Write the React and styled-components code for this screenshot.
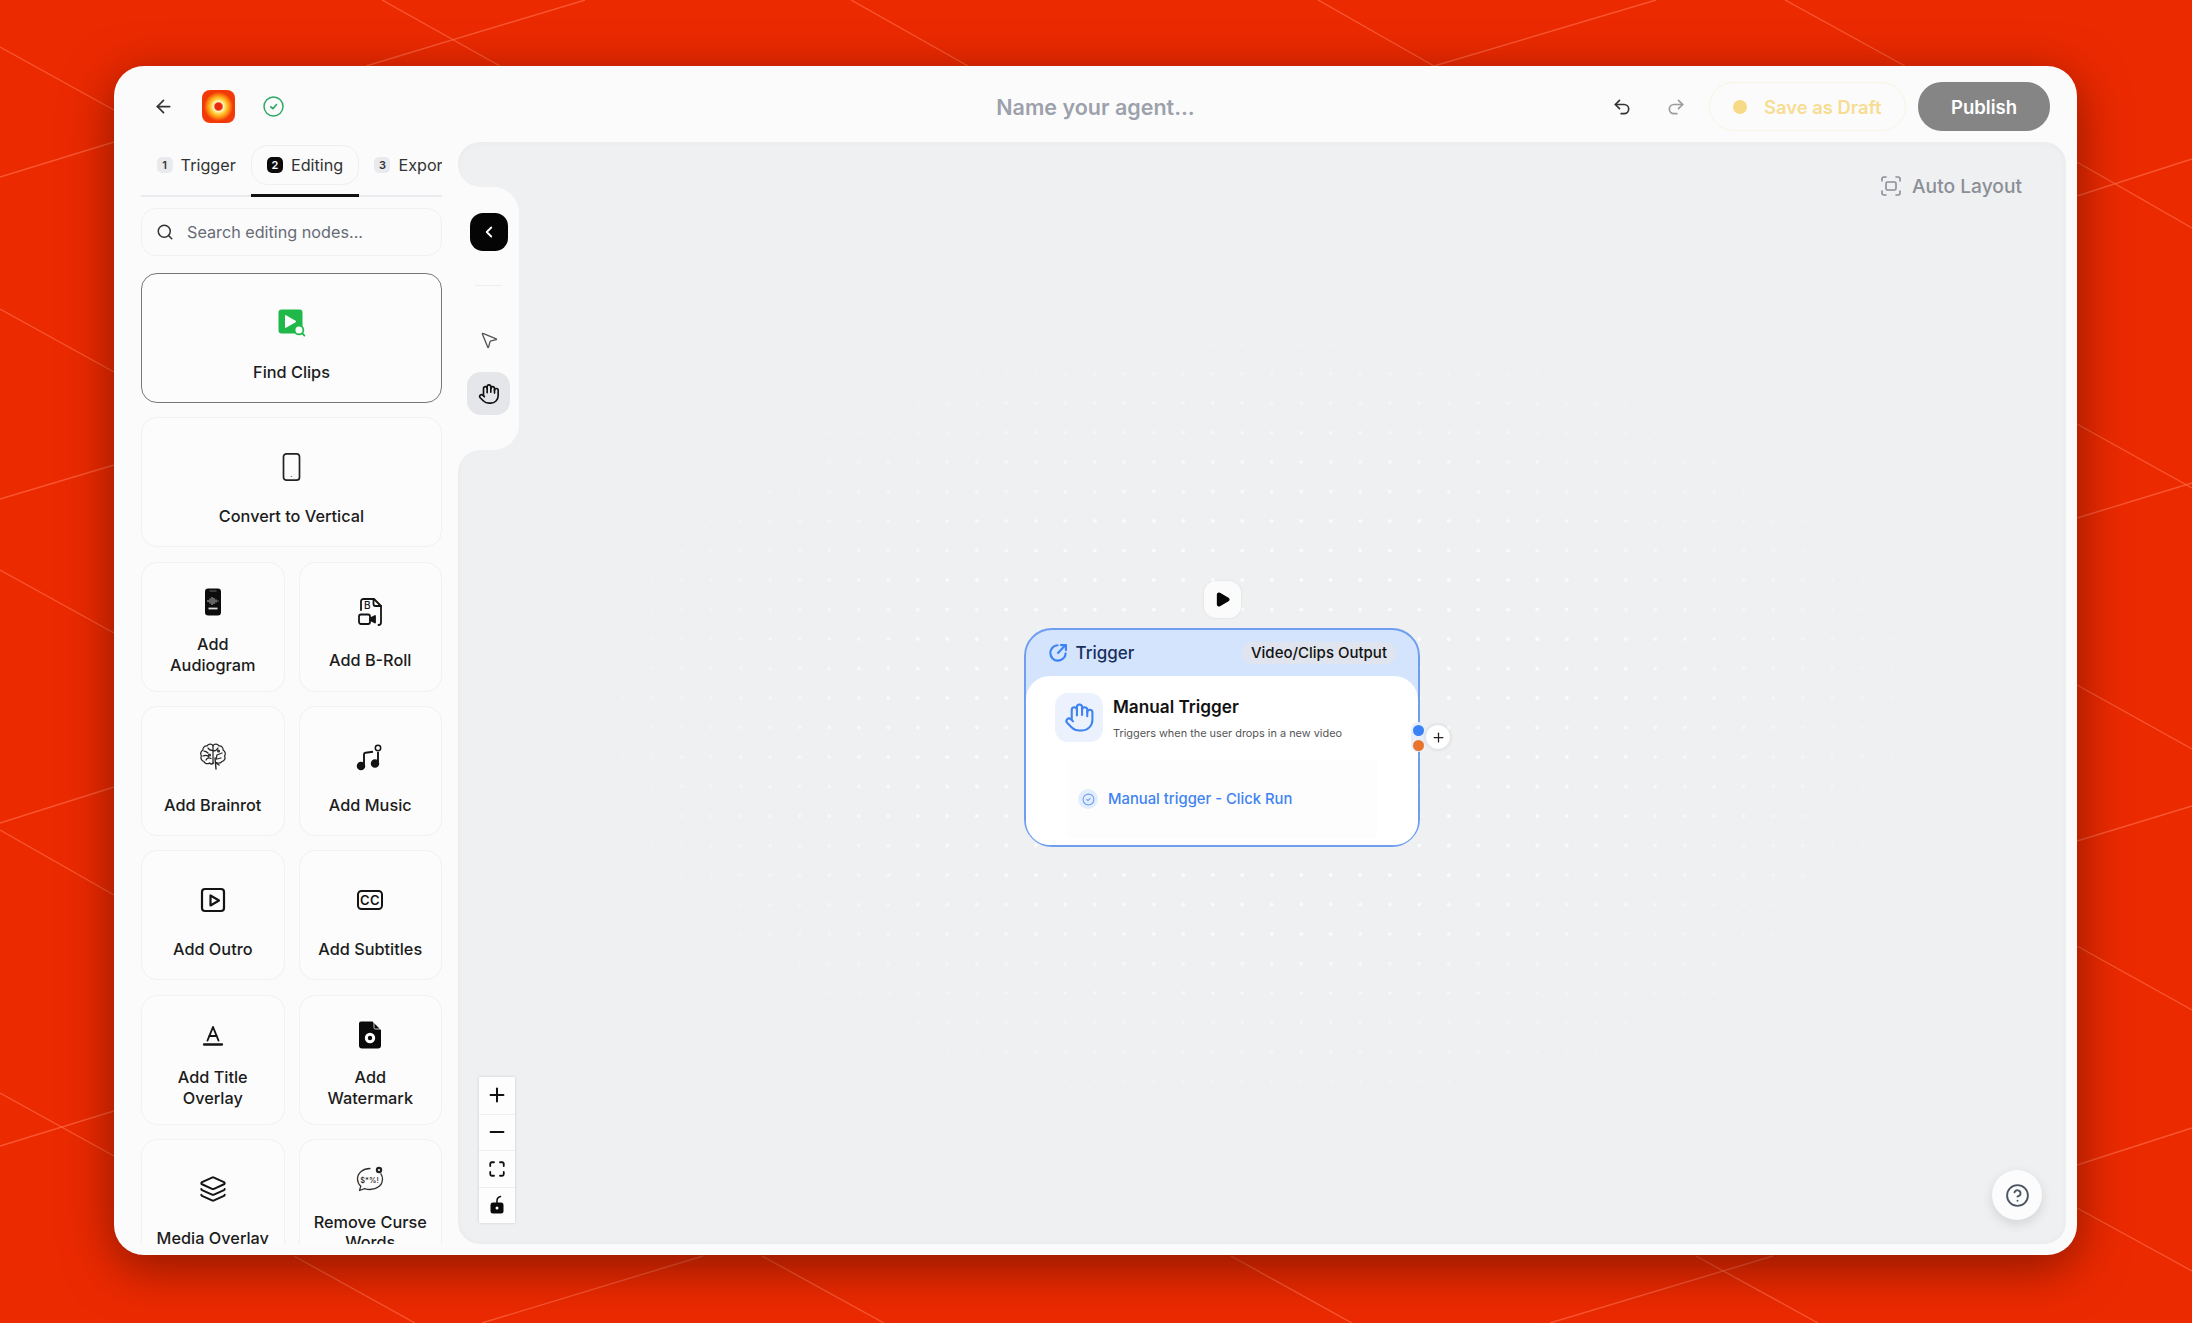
import styled, { createGlobalStyle } from 'styled-components';
import {
  ArrowLeft,
  ChevronLeft,
  CircleCheck,
  CircleHelp,
  Hand,
  Layers,
  Maximize,
  Minus,
  MousePointer2,
  Play,
  Plus,
  Redo2,
  Search,
  Undo2,
} from 'lucide-react';

const GlobalStyle = createGlobalStyle`
  html, body {
    margin: 0;
    padding: 0;
    height: 100%;
    background: #ec2a00;
  }
  * { box-sizing: border-box; }
  body {
    font-family: Inter, "Liberation Sans", sans-serif;
    color: #1a1a1a;
    overflow: hidden;
  }
`;

const Page = styled.div`
  position: relative;
  width: 2192px;
  height: 1323px;
  padding: 66px 115px 68px 114px;
  background: #ec2a00;
`;

const BackdropLines = styled.svg`
  position: absolute;
  inset: 0;
  width: 100%;
  height: 100%;
`;

const Window = styled.div`
  position: relative;
  display: flex;
  flex-direction: column;
  height: 100%;
  background: #fbfbfc;
  border-radius: 30px;
  box-shadow: 0 12px 50px rgba(70, 12, 0, 0.6);
`;

const Header = styled.header`
  display: grid;
  grid-template-columns: 1fr auto 1fr;
  align-items: center;
  height: 76px;
  flex-shrink: 0;
  padding: 5px 27px 0 39px;
`;

const HeaderLeft = styled.div`
  display: flex;
  align-items: center;
  gap: 28px;
`;

const HeaderRight = styled.div`
  display: flex;
  align-items: center;
  justify-content: flex-end;
`;

const Logo = styled.div`
  width: 33px;
  height: 33px;
  border-radius: 8px;
  background: radial-gradient(circle, #ea2c0c 0 15%, #fff4c4 21%, #ffcf3a 33%, #ff9414 46%, #f23a08 62%);
`;

const Title = styled.div`
  margin-left: -12px;
  font-size: 21.5px;
  font-weight: 600;
  color: #9ca1ab;
`;

const HistoryButton = styled.span`
  display: flex;
  width: 54px;
  justify-content: center;
  color: ${({ $muted }) => ($muted ? '#9b9b9b' : '#333')};
`;

const DraftButton = styled.div`
  display: flex;
  align-items: center;
  gap: 17px;
  width: 197px;
  height: 49px;
  margin-left: 6px;
  padding-left: 23px;
  border: 1px solid #faf4e2;
  border-radius: 24px;
  font-size: 18.4px;
  font-weight: 600;
  color: #f7dd92;
`;

const DraftDot = styled.span`
  width: 14px;
  height: 14px;
  border-radius: 50%;
  background: #f6da85;
`;

const PublishButton = styled.div`
  display: flex;
  align-items: center;
  justify-content: center;
  width: 132px;
  height: 49px;
  margin-left: 12px;
  border-radius: 24px;
  background: #858585;
  font-size: 18.5px;
  font-weight: 600;
  color: #fff;
`;

const Body = styled.div`
  display: flex;
  flex: 1;
  min-height: 0;
  margin-bottom: 11px;
`;

const Sidebar = styled.aside`
  display: flex;
  flex-direction: column;
  width: 344px;
  flex-shrink: 0;
  padding: 0 16px 0 27px;
`;

const Tabs = styled.div`
  display: flex;
  height: 55px;
  flex-shrink: 0;
  overflow: hidden;
  box-shadow: inset 0 -2px 0 #e9eaed;
`;

const Tab = styled.div`
  flex-shrink: 0;
  height: 55px;
  padding-top: 3px;
  border-bottom: 3px solid ${({ $active }) => ($active ? '#111' : 'transparent')};
`;

const TabPill = styled.div`
  display: flex;
  align-items: center;
  gap: 8px;
  height: 40px;
  padding: 0 14.6px;
  border: 1px solid ${({ $active }) => ($active ? '#eeeff1' : 'transparent')};
  border-radius: 16px;
  font-size: 16.2px;
  color: #333;
`;

const TabBadge = styled.span`
  display: flex;
  align-items: center;
  justify-content: center;
  width: 16px;
  height: 16px;
  border-radius: 5px;
  font-size: 11px;
  font-weight: 600;
  background: ${({ $active }) => ($active ? '#0b0b0b' : '#e9eaed')};
  color: ${({ $active }) => ($active ? '#fff' : '#333')};
`;

const SearchBox = styled.div`
  display: flex;
  align-items: center;
  gap: 13px;
  height: 48px;
  flex-shrink: 0;
  margin-top: 11px;
  padding-left: 14px;
  border: 1px solid #f0f0f2;
  border-radius: 15px;
  font-size: 16.2px;
  color: #666b75;
`;

const NodeGrid = styled.div`
  display: grid;
  grid-template-columns: 1fr 1fr;
  grid-auto-rows: 130px;
  gap: 14.35px 14px;
  flex: 1;
  min-height: 0;
  margin-top: 17px;
  overflow: hidden;
`;

const NodeCard = styled.div`
  display: flex;
  flex-direction: column;
  align-items: center;
  grid-column: ${({ $wide }) => ($wide ? 'span 2' : 'auto')};
  padding-top: ${({ $lines }) => ($lines === 2 ? '25px' : '35px')};
  border: ${({ $active }) => ($active ? '1.5px solid #77777b' : '1px solid #f1f1f3')};
  border-radius: 16px;
  background: #fcfcfc;
`;

const NodeIcon = styled.div`
  display: flex;
  align-items: center;
  justify-content: center;
  width: 28px;
  height: 28px;
  flex-shrink: 0;
  color: #141414;
  svg { overflow: visible; }
`;

const NodeLabel = styled.div`
  margin-top: ${({ $lines }) => ($lines === 2 ? '18.75px' : '24.75px')};
  padding: 0 14px;
  font-size: 16.3px;
  font-weight: 500;
  line-height: 20.5px;
  text-align: center;
  color: #1c1c1c;
`;

const Canvas = styled.main`
  position: relative;
  flex: 1;
  margin-right: 11px;
  border-radius: 22px;
  background: #eff0f2;
  box-shadow: inset 0 0 7px rgba(0, 0, 0, 0.035);
`;

const DotLayer = styled.div`
  position: absolute;
  inset: 0;
  background-image: radial-gradient(circle, #fbfbfc 1.7px, transparent 2.1px);
  background-size: 29.5px 29.5px;
  background-position: 2.5px 10.3px;
  mask-image: radial-gradient(ellipse 730px 440px at 50% 52%, #000 40%, transparent 100%);
`;

const ToolRail = styled.div`
  position: absolute;
  left: 0;
  top: 45px;
  display: flex;
  flex-direction: column;
  align-items: center;
  width: 61px;
  height: 263px;
  padding-top: 26px;
  background: #fbfbfc;
  border-radius: 0 26px 26px 0;

  &::before,
  &::after {
    content: '';
    position: absolute;
    left: 0;
    width: 22px;
    height: 22px;
  }
  &::before {
    top: -22px;
    background: radial-gradient(circle at 100% 0, transparent 21.5px, #fbfbfc 22px);
  }
  &::after {
    bottom: -22px;
    background: radial-gradient(circle at 100% 100%, transparent 21.5px, #fbfbfc 22px);
  }
`;

const CollapseButton = styled.div`
  display: flex;
  align-items: center;
  justify-content: center;
  width: 38px;
  height: 38px;
  border-radius: 13px;
  background: #050505;
  color: #fff;
`;

const RailDivider = styled.div`
  width: 27px;
  height: 1px;
  margin: 34px 0 32px;
  background: #eceef0;
`;

const RailTool = styled.div`
  display: flex;
  align-items: center;
  justify-content: center;
  width: 43px;
  height: 43px;
  margin-bottom: 11px;
  border-radius: 14px;
  background: ${({ $active }) => ($active ? '#e5e6e9' : 'transparent')};
  color: ${({ $active }) => ($active ? '#111' : '#555')};
`;

const ZoomControls = styled.div`
  position: absolute;
  left: 21px;
  bottom: 21px;
  width: 36px;
  background: #fdfdfd;
  box-shadow: 0 0 3px rgba(0, 0, 0, 0.14);
`;

const ZoomButton = styled.div`
  display: flex;
  align-items: center;
  justify-content: center;
  height: 36.5px;
  color: #111;
  & + & { border-top: 1px solid #efefef; }
`;

const AutoLayoutButton = styled.div`
  position: absolute;
  top: 32px;
  right: 44px;
  display: flex;
  align-items: center;
  gap: 11px;
  font-size: 19.2px;
  font-weight: 500;
  color: #8b8f96;
`;

const HelpButton = styled.div`
  position: absolute;
  right: 24px;
  bottom: 24px;
  display: flex;
  align-items: center;
  justify-content: center;
  width: 50px;
  height: 50px;
  border-radius: 50%;
  background: #fcfcfd;
  box-shadow: 0 4px 12px rgba(0, 0, 0, 0.12);
  color: #4b5563;
`;

const FlowNode = styled.div`
  position: absolute;
  left: 566px;
  top: 486px;
  display: flex;
  flex-direction: column;
  width: 396px;
  height: 219px;
  border: 2px solid #6f9ef0;
  border-radius: 28px;
  background: #d4e4fd;
`;

const FlowNodeHeader = styled.div`
  display: flex;
  align-items: center;
  justify-content: space-between;
  height: 46px;
  flex-shrink: 0;
  padding: 0 22px;
`;

const FlowNodeKind = styled.div`
  display: flex;
  align-items: center;
  gap: 7.5px;
  font-size: 17px;
  font-weight: 500;
  color: #16305e;
`;

const OutputBadge = styled.div`
  padding: 0 9px;
  height: 22px;
  border-radius: 10px;
  background: #dfe4ee;
  font-size: 15px;
  font-weight: 500;
  line-height: 22px;
  color: #111;
`;

const FlowNodeBody = styled.div`
  flex: 1;
  padding: 17px 29px 0;
  border-radius: 24px;
  background: #fff;
`;

const TriggerRow = styled.div`
  display: flex;
  gap: 10px;
`;

const TriggerIcon = styled.div`
  display: flex;
  align-items: center;
  justify-content: center;
  width: 48px;
  height: 49px;
  border-radius: 13px;
  background: #ebf2fe;
  color: #3f83f0;
`;

const TriggerName = styled.div`
  margin-top: 1px;
  font-size: 17.2px;
  font-weight: 600;
  line-height: 26px;
  color: #111;
`;

const TriggerHint = styled.div`
  margin-top: 5px;
  font-size: 10.9px;
  line-height: 16px;
  color: #555;
`;

const StatusBox = styled.div`
  display: flex;
  align-items: center;
  gap: 10px;
  width: 309px;
  height: 78px;
  margin: 18px 0 0 13px;
  padding-left: 10px;
  background: #fdfdfe;
  font-size: 14.8px;
  font-weight: 500;
  color: #3f83f0;
`;

const StatusIcon = styled.span`
  display: flex;
  align-items: center;
  justify-content: center;
  width: 20px;
  height: 20px;
  border-radius: 50%;
  background: #e4edfd;
`;

const RunButton = styled.div`
  position: absolute;
  left: 178px;
  top: -49px;
  display: flex;
  align-items: center;
  justify-content: center;
  width: 37px;
  height: 37px;
  border-radius: 12px;
  background: #fbfbfc;
  box-shadow: 0 0 3px rgba(0, 0, 0, 0.08);
  color: #050505;
`;

const PortStack = styled.div`
  position: absolute;
  left: 385px;
  top: 92px;
  display: flex;
  flex-direction: column;
  align-items: center;
  gap: 4px;
  width: 14px;
  height: 30px;
  padding-top: 2.5px;
  border-radius: 7px;
  background: #e8effb;
`;

const Port = styled.span`
  width: 11px;
  height: 11px;
  border-radius: 50%;
  background: ${({ $color }) => $color};
`;

const AddPort = styled.div`
  position: absolute;
  left: 400px;
  top: 95px;
  display: flex;
  align-items: center;
  justify-content: center;
  width: 24px;
  height: 24px;
  border-radius: 50%;
  background: #fff;
  box-shadow: 0 0 4px rgba(0, 0, 0, 0.14);
  color: #222;
`;

const lines = [
  [382, 0, 500, 66], [585, 0, 366, 66], [851, 0, 968, 66], [1318, 0, 1434, 66], [1656, 0, 1434, 66], [1785, 0, 1905, 66],
  [2077, 162, 2192, 228], [2077, 196, 2192, 159], [2077, 424, 2192, 488], [2077, 518, 2192, 483], [2077, 685, 2192, 749],
  [2077, 841, 2192, 806], [2077, 946, 2192, 1010], [2077, 1165, 2192, 1128], [2077, 1208, 2192, 1271],
  [0, 47, 114, 110], [0, 177, 114, 142], [0, 309, 114, 372], [0, 499, 114, 465], [0, 570, 114, 633], [0, 823, 114, 787],
  [0, 830, 114, 895], [0, 1093, 114, 1156], [0, 1146, 114, 1111],
  [294, 1256, 415, 1323], [703, 1256, 482, 1323], [762, 1256, 884, 1323], [1231, 1256, 1352, 1323],
  [1696, 1256, 1818, 1323], [1773, 1256, 1550, 1323],
];

const SavedIcon = () => (
  <svg width="21" height="21" viewBox="0 0 21 21" fill="none" stroke="#2fa866" strokeWidth="1.5" strokeLinecap="round" strokeLinejoin="round">
    <circle cx="10.5" cy="10.5" r="9.5" />
    <path d="M7.8 10.8l2 1.9 3.6-4" strokeWidth="1.7" />
  </svg>
);

const FindClipsIcon = () => (
  <svg width="28" height="28" viewBox="0 0 28 28">
    <rect x="0.5" y="0.5" width="24" height="24" rx="3" fill="#21b84a" />
    <path d="M7.5 6.5v12l10.5-6z" fill="#fff" stroke="#fff" strokeWidth="1" strokeLinejoin="round" />
    <circle cx="21" cy="21" r="4.4" fill="#fff" stroke="#21b84a" strokeWidth="1.7" />
    <path d="M24.2 24.2l2.2 2.4" stroke="#21b84a" strokeWidth="1.8" strokeLinecap="round" />
  </svg>
);

const PhoneIcon = () => (
  <svg width="28" height="28" viewBox="0 0 28 28" fill="none">
    <rect x="5.5" y="0.8" width="16" height="26.4" rx="3" stroke="#222" strokeWidth="1.7" />
    <path d="M12.8 23.5h1.4" stroke="#777" strokeWidth="1" />
  </svg>
);

const AudiogramIcon = () => (
  <svg width="28" height="28" viewBox="0 0 28 28" fill="none">
    <rect x="6" y="0.5" width="16" height="27" rx="3.2" fill="#0d0d0d" />
    <path d="M10.5 3h7" stroke="#666" strokeWidth="1" />
    <path d="M9 12v2M11 10.5v5M13 9v8M15 10v6M17 11.5v3M19 12.5v1" stroke="#bbb" strokeWidth="1" />
    <path d="M9.5 20.5h9" stroke="#ddd" strokeWidth="1.8" />
  </svg>
);

const BRollIcon = () => (
  <svg width="28" height="28" viewBox="0 0 28 28" fill="none" stroke="#141414" strokeWidth="1.8" strokeLinejoin="round" strokeLinecap="round">
    <path d="M5 12V3.5A2.5 2.5 0 0 1 7.5 1h10.500L25 8v16.500a2.500 2.500 0 0 1-2.500 2.500" />
    <path d="M17.5 1v5a2 2 0 0 0 2 2H25" />
    <text x="8" y="11" fontFamily="Inter, sans-serif" fontSize="10" fontWeight="500" fill="#141414" stroke="none">B</text>
    <rect x="3" y="16.5" width="11" height="9.5" rx="2" />
    <path d="M14 20.5l5-2.5v6.5l-5-2.5z" fill="#141414" />
  </svg>
);

const BrainIcon = () => (
  <svg width="28" height="28" viewBox="0 0 28 28" fill="none" stroke="#262626" strokeWidth="1.25" strokeLinecap="round" strokeLinejoin="round">
    <path d="M14 3.5C12.5 1.5 9 1.8 8 4 5.5 3.800 3.500 5.800 4 8 1.800 9.200 1 12 2.500 14c-1.300 2-.1 5 2.500 5.500.5 2 3.500 3 5.500 1.500 1.500 1.500 3 1 4 0" />
    <path d="M14 3.5C15.5 1.500 19 1.800 20 4c2.500-.2 4.500 1.800 4 4 2.200 1.200 3 4 1.500 6 1.300 2 .1 5-2.500 5.500-1.500 1.500-4 2-5.500 1" />
    <path d="M14 3.5V21M5 9c2 0 3 1 4 2M4 14c2-1 4-1 5.500.5M7 18c1-2 3-2.500 5-1.500M9 6c1 2 2.500 2.500 5 2.500M19 6c-1 2-2 3-5 3M23 11l-5 2M18 13l-1 4M22 16l-4 1" />
    <path d="M16 16l1 11M17 21l3 2" strokeWidth="1.4" />
    <circle cx="19.5" cy="9" r="0.9" />
    <circle cx="10.5" cy="13" r="0.9" />
  </svg>
);

const MusicIcon = () => (
  <svg width="28" height="28" viewBox="0 0 28 28" fill="none" stroke="#141414" strokeWidth="1.9">
    <circle cx="5" cy="24" r="3.3" fill="#141414" />
    <circle cx="19" cy="21.5" r="3.3" fill="#141414" />
    <path d="M8 24V12.5Q8 11 9.5 10.8L17 9.8" />
    <path d="M22 21.5V10" />
    <circle cx="22" cy="6" r="2.7" strokeWidth="1.5" />
  </svg>
);

const OutroIcon = () => (
  <svg width="28" height="28" viewBox="0 0 28 28" fill="none" stroke="#141414" strokeWidth="2.2" strokeLinejoin="round">
    <rect x="3" y="3" width="22" height="22" rx="3" />
    <path d="M11.5 9.5v10l8.5-5z" />
  </svg>
);

const SubtitlesIcon = () => (
  <svg width="28" height="28" viewBox="0 0 28 28" fill="none">
    <rect x="2" y="5" width="24" height="18" rx="3.5" stroke="#141414" strokeWidth="2" />
    <text x="14" y="18.8" textAnchor="middle" fontFamily="Inter, sans-serif" fontSize="13" fontWeight="600" letterSpacing="0.5" fill="#141414">CC</text>
  </svg>
);

const TitleOverlayIcon = () => (
  <svg width="28" height="28" viewBox="0 0 28 28" fill="none" stroke="#141414" strokeWidth="1.9" strokeLinecap="round" strokeLinejoin="round">
    <path d="M8.5 19.5L14 6l5.5 13.5" />
    <path d="M10.5 15h7" />
    <path d="M5 23.5h18" strokeWidth="2.3" />
  </svg>
);

const WatermarkIcon = () => (
  <svg width="28" height="28" viewBox="0 0 28 28">
    <path d="M5 0.5h11.5L25 9v15.5a3 3 0 0 1-3 3H6a3 3 0 0 1-3-3V2.500a2 2 0 0 1 2-2z" fill="#0a0a0a" />
    <path d="M18 1v5.5a1.5 1.5 0 0 0 1.5 1.5H24.5" fill="none" stroke="#fff" strokeWidth="0.8" />
    <circle cx="14" cy="17" r="5.2" fill="#fff" />
    <circle cx="14" cy="17" r="2.2" fill="#0a0a0a" />
  </svg>
);

const CurseIcon = () => (
  <svg width="28" height="28" viewBox="0 0 28 28" fill="none">
    <path d="M14 3.5C7 3.5 1.5 7.8 1.5 14c0 3 1.300 5.400 3.300 7.200L3.500 25.500l5.200-1.900c1.600.6 3.400.9 5.300.9 7 0 12.500-4.200 12.500-10.500 0-2-.6-3.700-1.600-5.200" stroke="#333" strokeWidth="1.3" strokeLinecap="round" strokeLinejoin="round" />
    <text x="13.5" y="17.5" textAnchor="middle" fontFamily="Inter, sans-serif" fontSize="7.5" fontWeight="500" fill="#222">$*%!</text>
    <circle cx="23" cy="5" r="3.2" fill="#222" />
    <circle cx="23" cy="5" r="1.1" fill="#fcfcfc" />
  </svg>
);

const AutoLayoutIcon = () => (
  <svg width="20" height="20" viewBox="0 0 20 20" fill="none" stroke="#8b8f96" strokeWidth="1.6" strokeLinecap="round">
    <path d="M1 5V3a2 2 0 0 1 2-2h2M15 1h2a2 2 0 0 1 2 2v2M19 15v2a2 2 0 0 1-2 2h-2M5 19H3a2 2 0 0 1-2-2v-2" />
    <rect x="5" y="6" width="10" height="8" rx="1.5" />
  </svg>
);

const TriggerKindIcon = () => (
  <svg width="20" height="20" viewBox="0 0 24 24" fill="none" stroke="#3b82f6" strokeWidth="2.5" strokeLinecap="round" strokeLinejoin="round">
    <path d="M11.5 2.8A9.2 9.2 0 1 0 21.2 12.5" />
    <path d="M12 12l9-9.500" />
    <path d="M15.5 2.5H21.5V8.5" />
  </svg>
);

const LockIcon = () => (
  <svg width="18" height="20" viewBox="0 0 18 20">
    <path d="M9 9V5.5Q9 2.5 12.5 1.5" fill="none" stroke="#0a0a0a" strokeWidth="1.5" strokeLinecap="round" />
    <rect x="2.5" y="7.5" width="13" height="11" rx="2.5" fill="#0a0a0a" />
    <circle cx="9" cy="13" r="1.5" fill="#fff" />
  </svg>
);

const nodes = [
  { label: 'Find Clips', icon: <FindClipsIcon />, wide: true, active: true },
  { label: 'Convert to Vertical', icon: <PhoneIcon />, wide: true },
  { label: <>Add<br />Audiogram</>, icon: <AudiogramIcon />, lines: 2 },
  { label: 'Add B-Roll', icon: <BRollIcon /> },
  { label: 'Add Brainrot', icon: <BrainIcon /> },
  { label: 'Add Music', icon: <MusicIcon /> },
  { label: 'Add Outro', icon: <OutroIcon /> },
  { label: 'Add Subtitles', icon: <SubtitlesIcon /> },
  { label: <>Add Title<br />Overlay</>, icon: <TitleOverlayIcon />, lines: 2 },
  { label: <>Add<br />Watermark</>, icon: <WatermarkIcon />, lines: 2 },
  { label: 'Media Overlay', icon: <Layers size={28} strokeWidth={1.7} /> },
  { label: <>Remove Curse<br />Words</>, icon: <CurseIcon />, lines: 2 },
];

export default function App() {
  return (
    <Page>
      <GlobalStyle />
      <BackdropLines viewBox="0 0 2192 1323">
        {lines.map(([x1, y1, x2, y2]) => (
          <line key={`${x1}-${y1}-${x2}`} x1={x1} y1={y1} x2={x2} y2={y2} stroke="#ff6a47" strokeOpacity="0.7" strokeWidth="1.4" />
        ))}
      </BackdropLines>
      <Window>
        <Header>
          <HeaderLeft>
            <ArrowLeft size={21} color="#333" />
            <Logo />
            <SavedIcon />
          </HeaderLeft>
          <Title>Name your agent...</Title>
          <HeaderRight>
            <HistoryButton><Undo2 size={20} /></HistoryButton>
            <HistoryButton $muted><Redo2 size={20} /></HistoryButton>
            <DraftButton>
              <DraftDot />
              Save as Draft
            </DraftButton>
            <PublishButton>Publish</PublishButton>
          </HeaderRight>
        </Header>
        <Body>
          <Sidebar>
            <Tabs>
              <Tab>
                <TabPill><TabBadge>1</TabBadge>Trigger</TabPill>
              </Tab>
              <Tab $active>
                <TabPill $active><TabBadge $active>2</TabBadge>Editing</TabPill>
              </Tab>
              <Tab>
                <TabPill><TabBadge>3</TabBadge>Export</TabPill>
              </Tab>
            </Tabs>
            <SearchBox>
              <Search size={18} color="#333" />
              Search editing nodes...
            </SearchBox>
            <NodeGrid>
              {nodes.map((node, i) => (
                <NodeCard key={i} $wide={node.wide} $active={node.active} $lines={node.lines}>
                  <NodeIcon>{node.icon}</NodeIcon>
                  <NodeLabel $lines={node.lines}>{node.label}</NodeLabel>
                </NodeCard>
              ))}
            </NodeGrid>
          </Sidebar>
          <Canvas>
            <DotLayer />
            <ToolRail>
              <CollapseButton><ChevronLeft size={18} strokeWidth={2.4} /></CollapseButton>
              <RailDivider />
              <RailTool><MousePointer2 size={20} strokeWidth={1.6} /></RailTool>
              <RailTool $active><Hand size={22} strokeWidth={1.8} /></RailTool>
            </ToolRail>
            <ZoomControls>
              <ZoomButton><Plus size={22} strokeWidth={2.2} /></ZoomButton>
              <ZoomButton><Minus size={22} strokeWidth={2.2} /></ZoomButton>
              <ZoomButton><Maximize size={18} strokeWidth={2.4} /></ZoomButton>
              <ZoomButton><LockIcon /></ZoomButton>
            </ZoomControls>
            <AutoLayoutButton>
              <AutoLayoutIcon />
              Auto Layout
            </AutoLayoutButton>
            <FlowNode>
              <RunButton><Play size={17} fill="#050505" /></RunButton>
              <FlowNodeHeader>
                <FlowNodeKind>
                  <TriggerKindIcon />
                  Trigger
                </FlowNodeKind>
                <OutputBadge>Video/Clips Output</OutputBadge>
              </FlowNodeHeader>
              <FlowNodeBody>
                <TriggerRow>
                  <TriggerIcon><Hand size={31} strokeWidth={1.6} /></TriggerIcon>
                  <div>
                    <TriggerName>Manual Trigger</TriggerName>
                    <TriggerHint>Triggers when the user drops in a new video</TriggerHint>
                  </div>
                </TriggerRow>
                <StatusBox>
                  <StatusIcon><CircleCheck size={13} color="#6b9ff2" strokeWidth={2} /></StatusIcon>
                  Manual trigger - Click Run
                </StatusBox>
              </FlowNodeBody>
              <PortStack>
                <Port $color="#3b82f6" />
                <Port $color="#e8742c" />
              </PortStack>
              <AddPort><Plus size={15} strokeWidth={2} /></AddPort>
            </FlowNode>
            <HelpButton><CircleHelp size={25} strokeWidth={1.8} /></HelpButton>
          </Canvas>
        </Body>
      </Window>
    </Page>
  );
}
